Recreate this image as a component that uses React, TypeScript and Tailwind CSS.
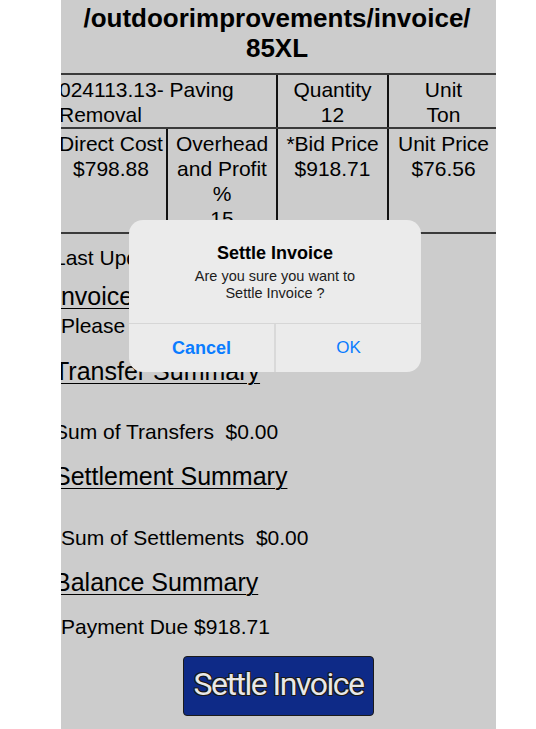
import React from "react";

type Cell = { lines: string[]; width: string; align?: "left" | "center"; last?: boolean };

const topRow: Cell[] = [
  { lines: ["024113.13- Paving Removal"], width: "w-[222px]", align: "left" },
  { lines: ["Quantity", "12"], width: "w-[111px]" },
  { lines: ["Unit", "Ton"], width: "w-[109px]", last: true },
];

const costRow: Cell[] = [
  { lines: ["Direct Cost", "$798.88"], width: "w-[112px]" },
  { lines: ["Overhead", "and Profit", "%", "15"], width: "w-[110px]" },
  { lines: ["*Bid Price", "$918.71"], width: "w-[111px]" },
  { lines: ["Unit Price", "$76.56"], width: "w-[109px]", last: true },
];

function Row({ cells, height, bottom }: { cells: Cell[]; height: string; bottom?: boolean }) {
  return (
    <div className={`flex ${height} ${bottom ? "border-b-2 border-[#3a3a3a]" : ""}`}>
      {cells.map((c) => (
        <div
          key={c.lines.join(" ")}
          className={`${c.width} overflow-hidden pt-[2px] ${c.last ? "" : "border-r-2 border-[#111]"} ${
            c.align === "left" ? "pl-[3px] text-left" : "text-center"
          }`}
        >
          {c.lines.map((l) => (
            <div key={l}>{l}</div>
          ))}
        </div>
      ))}
    </div>
  );
}

function Heading({ children, className = "" }: { children: React.ReactNode; className?: string }) {
  return (
    <div className={`text-[25px] leading-[29px] underline decoration-1 underline-offset-[3px] ${className}`}>
      {children}
    </div>
  );
}

function Line({ children, className = "" }: { children: React.ReactNode; className?: string }) {
  return <div className={`text-[21px] leading-[25px] whitespace-pre ${className}`}>{children}</div>;
}

function AlertDialog() {
  return (
    <div className="absolute left-[68px] top-[220px] flex h-[152px] w-[292px] flex-col overflow-hidden rounded-[14px] bg-[#ebebeb]">
      <div className="flex h-[103px] flex-col items-center pt-[22px]">
        <div className="text-[18px] font-bold leading-[22px] text-black">Settle Invoice</div>
        <div className="mt-[4px] text-center text-[14.5px] leading-[17px] text-[#1c1c1c]">
          Are you sure you want to
          <br />
          Settle Invoice ?
        </div>
      </div>
      <div className="h-px bg-[#d6d6d6]" />
      <div className="flex flex-1">
        <button className="flex flex-1 items-center justify-center text-[18px] font-bold leading-[22px] text-[#0a7cff]">
          Cancel
        </button>
        <div className="w-[2px] bg-[#d9d9d9]" />
        <button className="flex flex-1 items-center justify-center text-[17px] leading-[22px] text-[#0a7cff]">
          OK
        </button>
      </div>
    </div>
  );
}

export default function App() {
  return (
    <div className="h-[729px] w-[536px] bg-white font-['Liberation_Sans',Arial,sans-serif]">
      <div className="relative h-[729px] w-[435px] ml-[61px] overflow-hidden bg-[#cccccc] text-black">
        <div className="-ml-[7px] w-[446px]">
          {/* page title */}
          <h1 className="pt-[3px] text-center text-[26px] font-bold leading-[30px]">
            /outdoorimprovements/invoice/
            <br />
            85XL
          </h1>

          {/* line item table */}
          <div className="ml-[2px] mt-[10px] w-[442px] border-y-2 border-[#3a3a3a] text-[21px] leading-[25px]">
            <Row cells={topRow} height="h-[54px]" bottom />
            <Row cells={costRow} height="h-[103px]" />
          </div>

          <Line className="mt-[11px]">Last Updated</Line>
          <Heading className="mt-[12px]">Invoice Status</Heading>
          <Line className="mt-[2px] pl-[7px]">Please settle this</Line>

          <Heading className="mt-[19px]">Transfer Summary</Heading>
          <Line className="mt-[33px]">{"Sum of Transfers  $0.00"}</Line>

          <Heading className="mt-[18px]">Settlement Summary</Heading>
          <Line className="mt-[34px] pl-[7px]">{"Sum of Settlements  $0.00"}</Line>

          <Heading className="mt-[18px]">Balance Summary</Heading>
          <Line className="mt-[17px] pl-[7px]">Payment Due $918.71</Line>

          <div className="mt-[17px] flex justify-center pl-[3px]">
            <button className="flex h-[60px] w-[191px] items-center justify-center rounded-[4px] border border-[#1b1b1b] bg-[#0e2a87] pb-[4px] font-['Roboto',sans-serif] text-[32px] leading-none tracking-[-1.5px] text-[#e8e8e8] [text-shadow:1px_1px_0_#1a1a1a,-1px_-1px_0_#1a1a1a,1px_-1px_0_#1a1a1a,-1px_1px_0_#1a1a1a]">
              Settle Invoice
            </button>
          </div>
        </div>

        <AlertDialog />
      </div>
    </div>
  );
}
